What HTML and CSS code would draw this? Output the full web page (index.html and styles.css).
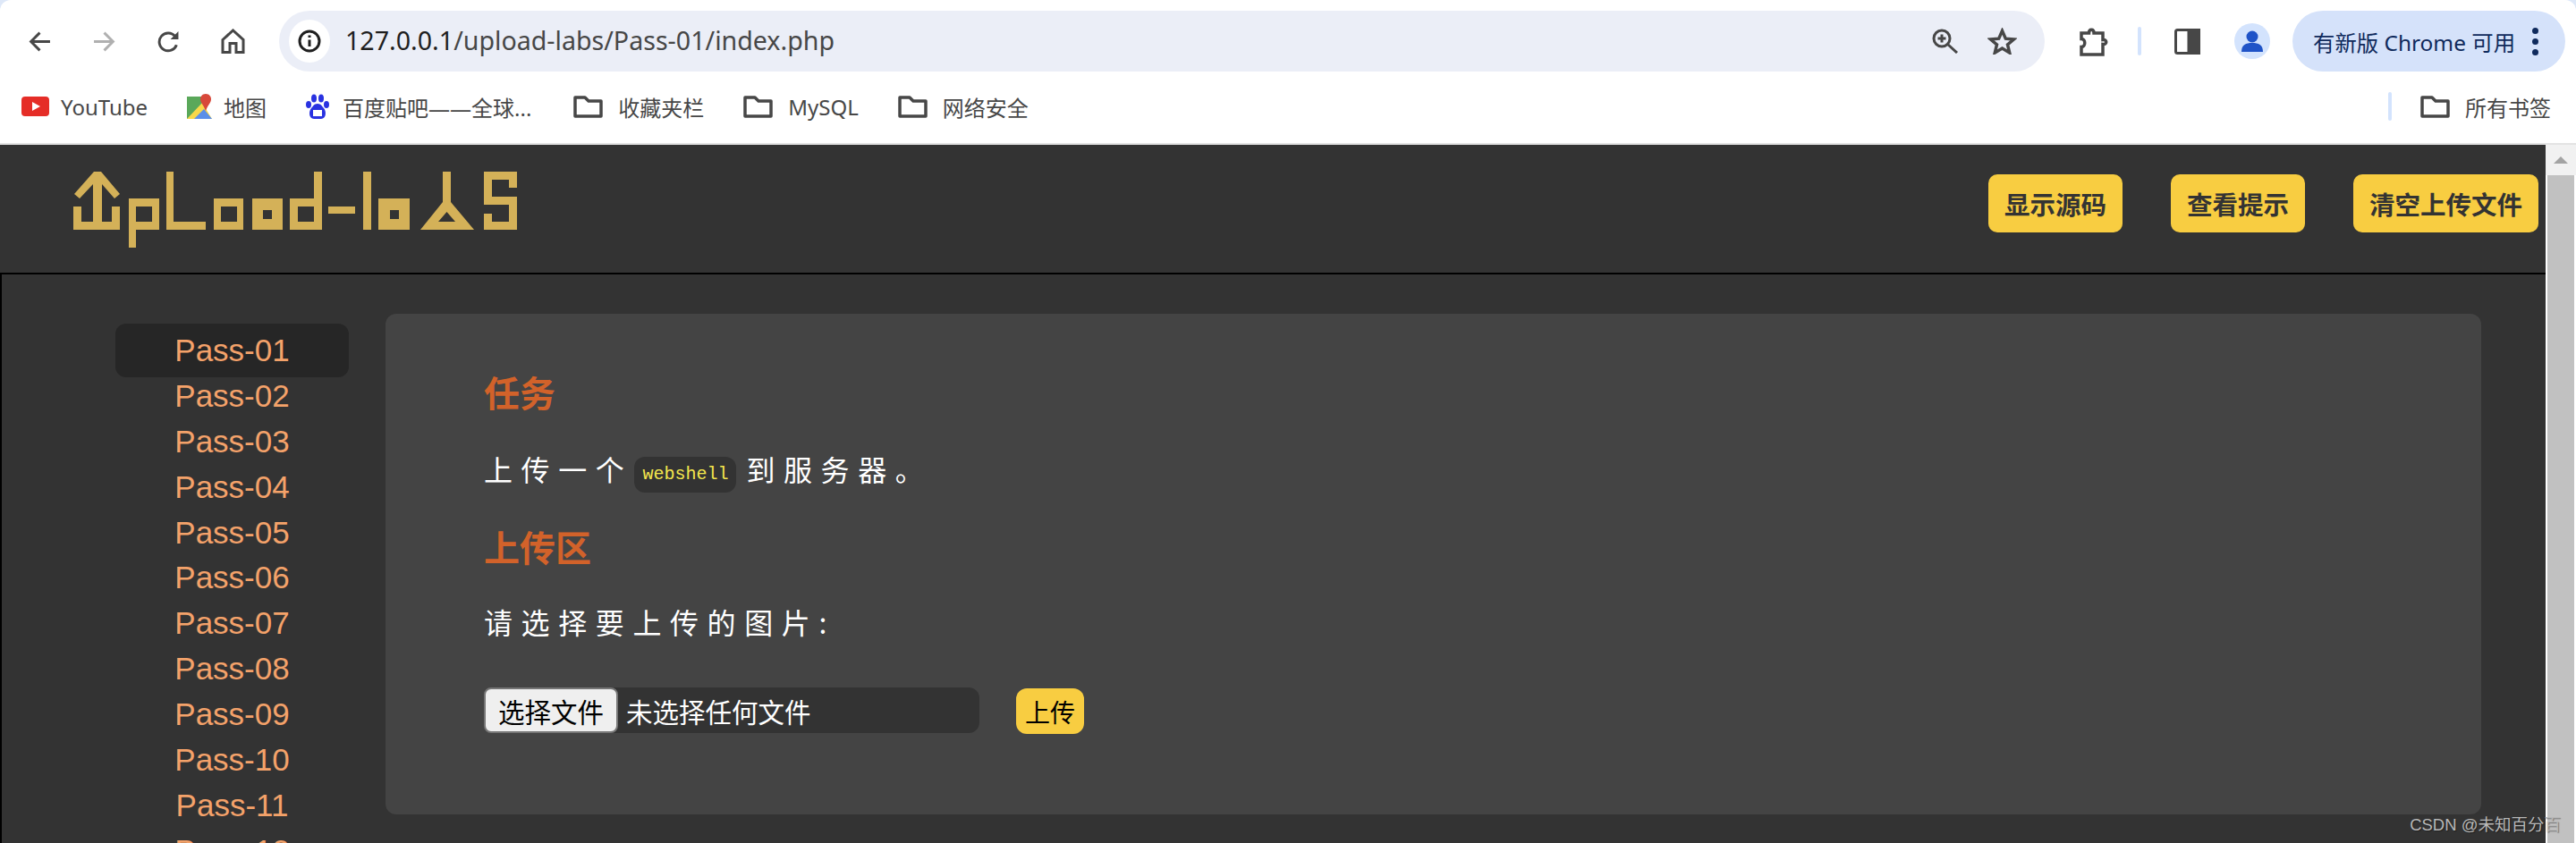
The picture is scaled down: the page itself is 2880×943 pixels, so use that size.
FILE: index.html
```html
<!DOCTYPE html>
<html lang="zh-CN">
<head>
    <meta charset="UTF-8">
    <title>upload-labs</title>
    <link rel="stylesheet" href="styles.css">
</head>
<body>

    <div class="toolbar">
        <div class="nav-btn">
            <svg class="nav-icon" viewBox="0 0 24 24"><path d="M23 12H3M12 2.5L2.5 12l9.500 9.500" /></svg>
        </div>
        <div class="nav-btn nav-off">
            <svg class="nav-icon" viewBox="0 0 24 24"><path d="M1 12h20M12 2.500l9.500 9.500-9.500 9.500" /></svg>
        </div>
        <div class="nav-btn">
            <svg class="nav-icon" viewBox="0 0 24 24"><path d="M20.500 15.500A9.500 9.500 0 1 1 19 6.500" /><path class="solid" d="M14 9.500h8.500V1z" /></svg>
        </div>
        <div class="nav-btn">
            <svg class="home-icon" viewBox="0 0 27 28"><path d="M2 12.500L13.500 2 25 12.500V26.500H17V16.500H10V26.500H2z" /></svg>
        </div>

        <div class="address">
            <div class="site-info">
                <svg viewBox="0 0 26 26" class="info-icon"><circle cx="13" cy="13" r="11" /><path d="M13 11.500v7.500M13 6.500v2.600" /></svg>
            </div>
            <span class="url">127.0.0.1<span class="url-path">/upload-labs/Pass-01/index.php</span></span>
            <svg class="zoom-icon" viewBox="0 0 30 28"><circle cx="11" cy="11" r="9" /><path d="M17.500 17.500L28 27M11 6.500v9M6.500 11h9" /></svg>
            <svg class="star-icon" viewBox="0 0 33 30"><path d="M16.500 3.500l3.800 8.700 9.200.8-7 6 2.200 9-8.200-4.900-8.200 4.900 2.200-9-7-6 9.200-.8z" /></svg>
        </div>

        <svg class="ext-icon" viewBox="0 0 33 34"><path d="M3 8h8.500c0-5 5.500-5 5.500 0H27v7.500c5-.8 5 5.800 0 5V32H3v-8.500c5 0 5-9 0-9z" /></svg>
        <div class="divider"></div>
        <svg class="side-icon" viewBox="0 0 29 29"><rect x="1.500" y="1.500" width="26" height="26" rx="2" /><rect class="solid" x="16" y="1.500" width="11.500" height="26" /></svg>
        <div class="profile">
            <svg viewBox="0 0 40 40" class="profile-icon"><circle cx="20" cy="15" r="6.500" /><path d="M8 32c0-8 5-10 12-10s12 2 12 10z" /></svg>
        </div>
        <div class="update-pill">
            <span>有新版 Chrome 可用</span>
            <div class="dots"><i></i><i></i><i></i></div>
        </div>
    </div>

    <div class="bookmarks">
        <div class="bookmark">
            <svg class="bm-icon" width="31" height="22" viewBox="0 0 31 22"><rect width="31" height="22" rx="4" fill="#e52d27" /><path d="M12 6l9 5-9 5z" fill="#fff" /></svg>
            <span>YouTube</span>
        </div>
        <div class="bookmark">
            <svg class="bm-icon" width="28" height="28" viewBox="0 0 28 28">
                <path d="M0 3h17v25H0z" fill="#5aa85a" />
                <path d="M0 28L17 10l11 18z" fill="#f7d84a" />
                <path d="M8 28l11-11 9 11z" fill="#5b8fe8" />
                <path d="M21 0c-4 0-6 3-6 6 0 4 4 7 6 13 2-6 6-9 6-13 0-3-2-6-6-6z" fill="#d8483a" />
            </svg>
            <span>地图</span>
        </div>
        <div class="bookmark bm-baidu">
            <svg class="bm-icon" width="26" height="28" viewBox="0 0 26 28" fill="#2932e1">
                <ellipse cx="9" cy="5" rx="3" ry="4.500" /><ellipse cx="17" cy="5" rx="3" ry="4.500" />
                <ellipse cx="3" cy="12" rx="3" ry="4" /><ellipse cx="23" cy="12" rx="3" ry="4" />
                <path d="M13 11c-4 0-5 3-7 5-3 3-3 12 3 12h8c6 0 6-9 3-12-2-2-3-5-7-5z" />
                <rect x="8" y="18" width="10" height="7" fill="#fff" />
            </svg>
            <span>百度贴吧——全球...</span>
        </div>
        <div class="bookmark bm-folder">
            <svg class="folder" viewBox="0 0 33 25"><path d="M2 2h11l4 4h14v17H2z" /></svg>
            <span>收藏夹栏</span>
        </div>
        <div class="bookmark bm-folder">
            <svg class="folder" viewBox="0 0 33 25"><path d="M2 2h11l4 4h14v17H2z" /></svg>
            <span>MySQL</span>
        </div>
        <div class="bookmark bm-folder">
            <svg class="folder" viewBox="0 0 33 25"><path d="M2 2h11l4 4h14v17H2z" /></svg>
            <span>网络安全</span>
        </div>
        <div class="bm-divider"></div>
        <div class="bookmark bm-folder">
            <svg class="folder" viewBox="0 0 33 25"><path d="M2 2h11l4 4h14v17H2z" /></svg>
            <span>所有书签</span>
        </div>
    </div>

    <div class="viewport">
        <div class="page">
            <div class="header">
                <svg class="logo" viewBox="82 192 496 85">
                    <path fill-rule="evenodd" d="M105 192H113L134 217L128 222L114 206V248H125V231H134V257H82V231H91V248H104V206L89 222L83 217Z
                        M144 222H178V257H152V277H144Z M152 231V248H170V231Z
                        M186 192H194V248H230V257H186Z
                        M239 222H272V257H239Z M247 231V248H265V231Z
                        M282 222H316V257H282Z M294 235V245H304V235Z
                        M351 192H360V257H324V222H351Z M333 231V248H351V231Z
                        M367 231H397V239H367Z
                        M406 192H415V257H406Z
                        M423 222H458V257H423Z M436 235V245H446V235Z
                        M495 192H504V226L530 257H470L495 226Z M499.500 237L490 248H509Z
                        M541 192H578V210H569V201H550V220H578V257H541V239H550V248H569V229H541Z" />
                </svg>
                <div class="header-btns">
                    <button class="head-btn">显示源码</button>
                    <button class="head-btn">查看提示</button>
                    <button class="head-btn">清空上传文件</button>
                </div>
            </div>

            <div class="content">
                <ul class="pass-list">
                    <li class="active"><a>Pass-01</a></li>
                    <li><a>Pass-02</a></li>
                    <li><a>Pass-03</a></li>
                    <li><a>Pass-04</a></li>
                    <li><a>Pass-05</a></li>
                    <li><a>Pass-06</a></li>
                    <li><a>Pass-07</a></li>
                    <li><a>Pass-08</a></li>
                    <li><a>Pass-09</a></li>
                    <li><a>Pass-10</a></li>
                    <li><a>Pass-11</a></li>
                    <li><a>Pass-12</a></li>
                </ul>

                <div class="panel">
                    <h2>任务</h2>
                    <p class="task">上传一个<code>webshell</code>到服务器。</p>
                    <h2 class="upload-title">上传区</h2>
                    <p class="choose">请选择要上传的图片:</p>
                    <form class="upload-form">
                        <div class="file-input">
                            <button type="button" class="file-btn">选择文件</button>
                            <span>未选择任何文件</span>
                        </div>
                        <button type="button" class="submit-btn">上传</button>
                    </form>
                </div>
            </div>
        </div>

        <div class="scrollbar">
            <div class="scroll-up"><i></i></div>
            <div class="scroll-thumb"></div>
        </div>
    </div>

    <div class="watermark">CSDN @未知百分百</div>

</body>
</html>
```

FILE: styles.css
```css
* {
    box-sizing: border-box;
}
body {
    margin: 0;
    height: 943px;
    overflow: hidden;
    position: relative;
    background-color: #dee8f8;
    font-family: "Noto Sans", "Noto Sans CJK SC", sans-serif;
}

/* browser chrome */
.toolbar {
    display: flex;
    align-items: center;
    height: 80px;
    padding: 12px 12px 0 8px;
    background: white;
    border-radius: 12px 12px 0 0;
}
.nav-btn {
    display: flex;
    justify-content: center;
    align-items: center;
    width: 72px;
    height: 68px;
}
.nav-icon {
    width: 25px;
    height: 25px;
    fill: none;
    stroke: #474747;
    stroke-width: 2.800;
}
.nav-icon .solid {
    fill: #474747;
    stroke: none;
}
.nav-off .nav-icon {
    stroke: #b0b0b0;
}
.home-icon {
    width: 27px;
    height: 28px;
    fill: none;
    stroke: #474747;
    stroke-width: 3;
}
.address {
    flex: 1;
    display: flex;
    align-items: center;
    height: 68px;
    margin-left: 16px;
    padding: 0 31px 0 11px;
    background: #ebeef7;
    border-radius: 34px;
}
.site-info {
    display: flex;
    justify-content: center;
    align-items: center;
    width: 46px;
    height: 48px;
    background: white;
    border-radius: 50%;
}
.info-icon {
    width: 26px;
    height: 26px;
    fill: none;
    stroke: #1f1f1f;
    stroke-width: 3;
}
.url {
    flex: 1;
    margin-left: 17px;
    font-size: 28.600px;
    line-height: 40px;
    margin-top: -2px;
    color: #1f1f1f;
}
.url-path {
    color: #474747;
}
.zoom-icon {
    width: 30px;
    height: 28px;
    fill: none;
    stroke: #474747;
    stroke-width: 3;
}
.star-icon {
    width: 33px;
    height: 30px;
    margin-left: 32px;
    fill: none;
    stroke: #474747;
    stroke-width: 3.500;
}
.ext-icon {
    width: 33px;
    height: 34px;
    margin-left: 38px;
    fill: none;
    stroke: #474747;
    stroke-width: 3.500;
}
.divider {
    width: 4px;
    height: 32px;
    margin-left: 33px;
    background: #d3e3fd;
    border-radius: 2px;
}
.side-icon {
    width: 29px;
    height: 29px;
    margin-left: 37px;
    fill: none;
    stroke: #474747;
    stroke-width: 3;
}
.side-icon .solid {
    fill: #474747;
}
.profile {
    width: 40px;
    height: 40px;
    margin-left: 38px;
    background: #d3e3fd;
    border-radius: 50%;
}
.profile-icon {
    display: block;
    width: 40px;
    height: 40px;
    fill: #1f53c7;
}
.update-pill {
    display: flex;
    align-items: center;
    width: 305px;
    height: 68px;
    margin-left: 25px;
    padding-left: 23px;
    background: #d5e2fa;
    border-radius: 34px;
    font-size: 24.400px;
    color: #0f2a5c;
    white-space: nowrap;
}
.dots {
    display: flex;
    flex-direction: column;
    gap: 5px;
    margin-left: 19px;
}
.dots i {
    width: 7px;
    height: 7px;
    background: #0f2a5c;
    border-radius: 50%;
}
.bookmarks {
    display: flex;
    align-items: center;
    height: 80px;
    padding: 0 28px 2px 24px;
    background: white;
    font-size: 24px;
    color: #474747;
}
.bookmark {
    display: flex;
    align-items: center;
    gap: 13px;
    margin-right: 44px;
    white-space: nowrap;
}
.bm-baidu {
    gap: 15px;
    margin-right: 47px;
}
.bm-folder {
    gap: 17px;
}
.bm-folder:last-child {
    margin-right: 0;
}
.folder {
    width: 33px;
    height: 25px;
    fill: none;
    stroke: #474747;
    stroke-width: 3.500;
    stroke-linejoin: round;
}
.bm-divider {
    width: 4px;
    height: 32px;
    margin-left: auto;
    margin-right: 32px;
    background: #d3e3fd;
    border-radius: 2px;
}

/* page */
.viewport {
    display: flex;
    height: 783px;
    background: white;
    border-top: 2px solid #e3e3e3;
}
.page {
    flex: 1;
    min-width: 0;
    background: #333;
    font-family: "Liberation Sans", "Noto Sans CJK SC", sans-serif;
}
.header {
    display: flex;
    justify-content: space-between;
    height: 145px;
    padding: 30px 8px 0 82px;
    border-bottom: 2px solid black;
}
.logo {
    width: 496px;
    height: 85px;
    fill: #d4b158;
}
.header-btns {
    display: flex;
    gap: 54px;
    margin-top: 3px;
}
.head-btn {
    width: 150px;
    height: 65px;
    padding: 0;
    background: #f8cd41;
    border: none;
    border-radius: 10px;
    color: #333;
    font: bold 28.500px "Noto Sans CJK SC", sans-serif;
}
.head-btn:last-child {
    width: 207px;
}
.content {
    display: flex;
    align-items: flex-start;
    height: 640px;
    padding: 44px 72px 0 127px;
    border-left: 2px solid black;
}
.pass-list {
    width: 261px;
    margin: 16px 41px 0 0;
    padding: 0;
    list-style: none;
    text-align: center;
}
.pass-list li {
    height: 50.900px;
    font-size: 35px;
    line-height: 50.900px;
    color: #f4a26a;
}
.pass-list .active a {
    display: block;
    position: relative;
    height: 60px;
    line-height: 60px;
    top: -5px;
    background: #262626;
    border-radius: 12px;
}
.panel {
    flex: 1;
    height: 560px;
    padding: 57px 110px 0;
    background: #444;
    border-radius: 12px;
    color: white;
    font-family: "Noto Sans CJK SC", sans-serif;
}
.panel h2 {
    margin: 0;
    font-size: 40px;
    line-height: 60px;
    color: #d2622a;
}
.panel p {
    margin: 0;
    font-size: 32px;
    line-height: 60px;
    letter-spacing: 9.600px;
}
.task {
    margin-top: 26px !important;
}
.task code {
    display: inline-block;
    height: 40px;
    padding: 0 9px;
    margin: 0 11px 0 2px;
    background: #333;
    border-radius: 12px;
    color: #f5e74d;
    font: 20px/40px "Liberation Mono", monospace;
    letter-spacing: 0;
    vertical-align: 2px;
}
.upload-title {
    margin-top: 27px !important;
}
.choose {
    margin-top: 24px !important;
}
.upload-form {
    display: flex;
    align-items: flex-start;
    margin-top: 44px;
}
.file-input {
    display: flex;
    align-items: center;
    width: 554px;
    height: 51px;
    background: #333;
    border-radius: 12px;
    font-size: 29.500px;
}
.file-btn {
    width: 150px;
    height: 51px;
    margin-right: 9px;
    padding: 0;
    background: #efefef;
    border: 2px solid #767676;
    border-radius: 8px;
    color: black;
    font: 29.500px "Noto Sans CJK SC", sans-serif;
}
.submit-btn {
    width: 76px;
    height: 51px;
    margin: 1px 0 0 41px;
    padding: 0;
    background: #f8cd41;
    border: none;
    border-radius: 12px;
    color: black;
    font: 28px "Noto Sans CJK SC", sans-serif;
}
.scrollbar {
    width: 34px;
    padding-left: 2px;
}
.scroll-up {
    display: flex;
    justify-content: center;
    align-items: center;
    height: 34px;
    margin-left: -2px;
    background: #f1f1f1;
}
.scroll-up i {
    width: 0;
    height: 0;
    border-left: 8px solid transparent;
    border-right: 8px solid transparent;
    border-bottom: 8px solid #a3a3a3;
}
.scroll-thumb {
    width: 30px;
    height: 749px;
    background: #c1c1c1;
}
.watermark {
    position: absolute;
    right: 17px;
    bottom: 9px;
    font: 18.500px "Liberation Sans", "Noto Sans CJK SC", sans-serif;
    color: #b8b8b8;
    text-shadow: 1px 1px 1px rgba(0, 0, 0, 0.4);
}
```
